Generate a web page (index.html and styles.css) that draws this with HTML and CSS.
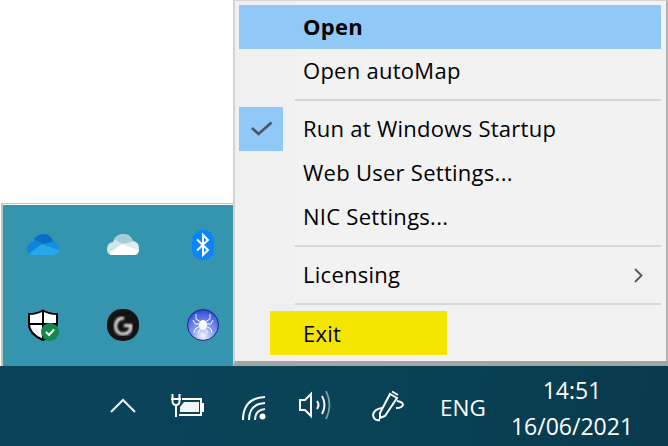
FILE: index.html
```html
<!DOCTYPE html>
<html lang="en">
<head>
<meta charset="utf-8">
<title>autoMap tray menu</title>
<link rel="stylesheet" href="styles.css">
</head>
<body>
<div class="desktop">
  <div class="workspace">
    <div class="left-col">
      <div class="tray-popup">
        <div class="tray-cell">
          <svg width="32" height="21" viewBox="0 0 32 21"><path d="M4 21 Q0 20 0 15 Q0 9 6 8 Q10 0 17 0 Q23 0 26 7 Q32 8 32 15 Q32 20 28 21Z" fill="#0f82dd"/><path d="M7 5 Q10 0 17 0 Q23 0 26 7 L25 8 L16 10Z" fill="#0a6fc4"/><path d="M25 8 L26 7 Q32 8 32 15 L31 16 L16 10Z" fill="#1490df"/><path d="M2 19.500 L15 10 L31 16 L32 15 Q32 20 28 21 H4Z" fill="#28a8ea"/></svg>
        </div>
        <div class="tray-cell">
          <svg width="32" height="21" viewBox="0 0 32 21"><path d="M4 21 Q0 20 0 15 Q0 9 6 8 Q10 0 17 0 Q23 0 26 7 Q32 8 32 15 Q32 20 28 21Z" fill="#cfe5ea"/><path d="M7 5 Q10 0 17 0 Q23 0 26 7 L25 8 L16 10Z" fill="#a3cdd8"/><path d="M25 8 L26 7 Q32 8 32 15 L31 16 L16 10Z" fill="#d9ebef"/><path d="M2 19.500 L15 10 L31 16 L32 15 Q32 20 28 21 H4Z" fill="#fff"/></svg>
        </div>
        <div class="tray-cell">
          <svg width="22" height="30" viewBox="0 0 22 30"><rect width="22" height="30" rx="10" fill="#0a84ff"/><path d="M5 9.500 L16 20 L11 25 V5 L16 10 L5 20.500" fill="none" stroke="#fff" stroke-width="2"/></svg>
        </div>
        <div class="tray-cell">
          <svg width="32" height="32" viewBox="0 0 32 32"><path d="M16 1.500 Q10 5 2 5 V15 Q2 25 16 31 Q29 25 30 15 V5 Q22 5 16 1.500Z" fill="#fff" stroke="#000" stroke-width="2"/><path d="M16 1.500 V31 M2 15 H30" stroke="#000" stroke-width="2"/><circle cx="23" cy="23" r="9" fill="#118a4a"/><path d="M19 23 L22 26 L27 20.500" fill="none" stroke="#fff" stroke-width="2"/></svg>
        </div>
        <div class="tray-cell">
          <svg width="32" height="32" viewBox="0 0 32 32"><defs><filter id="soft"><feGaussianBlur stdDeviation="0.800"/></filter></defs><rect width="32" height="32" rx="15" fill="#131313"/><path d="M17 9 Q9 9 8.500 17 Q9 25 16 25 Q24 25 24 16.500 H17" fill="none" stroke="#e2e2e2" stroke-width="3" filter="url(#soft)"/></svg>
        </div>
        <div class="tray-cell">
          <svg width="32" height="32" viewBox="0 0 32 32"><defs><radialGradient id="orb" cx="50%" cy="85%" r="80%"><stop offset="0" stop-color="#f8f8ff"/><stop offset="0.45" stop-color="#8496f7"/><stop offset="1" stop-color="#3550d8"/></radialGradient></defs><circle cx="16" cy="16" r="15.500" fill="url(#orb)" stroke="#162a80"/><ellipse cx="16" cy="16" rx="4" ry="5" fill="#fff"/><path d="M14 13 L9 10 L9 5 M18 13 L23 10 L23 5 M13 15 H8 L6 11 M19 15 H24 L26 11 M13 17 L8 20 L7 24 M19 17 L24 20 L25 24 M14 19 L11 24 M18 19 L21 24" fill="none" stroke="#fff" stroke-width="1"/></svg>
        </div>
      </div>
    </div>
    <div class="menu">
      <div class="row row-active"><span class="gutter"></span><span class="label label-bold">Open</span></div>
      <div class="row"><span class="gutter"></span><span class="label">Open autoMap</span></div>
      <div class="sep"></div>
      <div class="row"><span class="gutter gutter-checked"><svg width="22" height="16" viewBox="0 0 22 16"><path d="M1 7 L7.500 13 L20.500 1.500" fill="none" stroke="#4a5560" stroke-width="2.600"/></svg></span><span class="label">Run at Windows Startup</span></div>
      <div class="row"><span class="gutter"></span><span class="label">Web User Settings...</span></div>
      <div class="row"><span class="gutter"></span><span class="label">NIC Settings...</span></div>
      <div class="sep"></div>
      <div class="row"><span class="gutter"></span><span class="label">Licensing</span><svg class="chevron" width="9" height="15" viewBox="0 0 9 15"><path d="M1 1 L7.500 7.500 L1 14" fill="none" stroke="#555" stroke-width="1.800"/></svg></div>
      <div class="sep"></div>
      <div class="row row-exit"><span class="exit-mark"><span class="label">Exit</span></span></div>
    </div>
  </div>
  <div class="taskbar">
    <svg class="tb-chevron" width="26" height="15" viewBox="0 0 26 15"><path d="M1 14 L13 2 L25 14" fill="none" stroke="#eef4f6" stroke-width="2"/></svg>
    <svg class="tb-power" width="33" height="24" viewBox="0 0 33 24"><path d="M1.500 1 V8 Q1.500 12 5 12 Q8.500 12 8.500 8 V1 M0 6 H10 M5 12 V24" fill="none" stroke="#fff" stroke-width="2"/><path d="M11 6 H30 V22 H8 M30 11 H32 V18 H30" fill="none" stroke="#fff" stroke-width="2"/><path d="M13 9 H28 V19 H9 V14Z" fill="#f0f5f6"/></svg>
    <svg class="tb-wifi" width="26" height="26" viewBox="0 0 26 26"><path d="M2 25 Q2 3 24 2" fill="none" stroke="#fff" stroke-width="2"/><path d="M8 25 Q8 9 24 8" fill="none" stroke="#fff" stroke-width="2"/><path d="M14 25 Q14 15 24 14" fill="none" stroke="#fff" stroke-width="2" opacity="0.900"/><circle cx="21.500" cy="21.500" r="3" fill="#fff"/></svg>
    <svg class="tb-sound" width="33" height="28" viewBox="0 0 33 28"><path d="M1 9 H6 L12 3 V25 L6 19 H1Z" fill="none" stroke="#fff" stroke-width="2"/><path d="M18 10 Q21 14 18 18" fill="none" stroke="#fff" stroke-width="2"/><path d="M23 5 Q28 14 23 23" fill="none" stroke="#fff" stroke-width="2"/><path d="M27 0 Q34 14 27 28" fill="none" stroke="#7f9ea9" stroke-width="1.800"/></svg>
    <svg class="tb-pen" width="33" height="33" viewBox="0 0 33 33"><path d="M11 19 Q3 20 2 26 Q3 32 9 31" fill="none" stroke="#fff" stroke-width="2"/><path d="M19 5 L26 9 L14 27 L9 29 L9 24Z" fill="none" stroke="#fff" stroke-width="2"/><path d="M21 2.500 L27 6" stroke="#fff" stroke-width="2"/><path d="M26 12 Q32 13 32 16 Q31 19 25 19" fill="none" stroke="#fff" stroke-width="2"/></svg>
    <span class="tb-lang">ENG</span>
    <div class="tb-clock"><span>14:51</span><span>16/06/2021</span></div>
  </div>
</div>
</body>
</html>
```
FILE: styles.css
```css
* { box-sizing: border-box; }
html, body { margin: 0; padding: 0; }
body { background: #fff; overflow: hidden; font-family: "Open Sans", "Noto Sans", sans-serif; }

.desktop { width: 668px; height: 446px; display: flex; flex-direction: column; overflow: hidden; }
.workspace { height: 366px; display: flex; align-items: stretch; }

.left-col { width: 233px; display: flex; flex-direction: column; justify-content: flex-end; padding-left: 1px; }
.tray-popup {
  height: 163px;
  background: #3595ae;
  border-top: 1px solid #c4c4c4;
  border-left: 2px solid #c4c4c4;
  box-shadow: inset 0 1px 0 #fff;
  display: grid;
  grid-template-columns: 80px 80px 80px;
  grid-template-rows: 81px 79px;
}
.tray-cell { display: flex; align-items: center; justify-content: center; }

.menu {
  width: 435px;
  height: 366px;
  background: linear-gradient(to right, #f0f0f0 60px, #f2f2f2 60px);
  border-top: 1px solid #d4d4d4;
  border-left: 2px solid #d4d4d4;
  border-right: 2px solid #b0b0b0;
  border-bottom: 5px solid #a4a4a4;
  padding: 4px 5px 0 4px;
  display: flex;
  flex-direction: column;
}
.row { height: 44px; flex: none; display: flex; align-items: center; font-size: 22px; letter-spacing: 0.27px; line-height: 44px; color: #000; }
.row > .label { padding-bottom: 2px; }
.row-active { background: #90c8f8; }
.gutter { width: 64px; height: 44px; flex: none; display: flex; align-items: center; }
.gutter-checked { background: linear-gradient(to right, #90c8f8 44px, transparent 44px); padding-left: 12px; }
.label { white-space: nowrap; }
.label-bold { font-weight: 700; }
.chevron { margin-left: auto; margin-right: 18px; }

.sep { height: 14px; flex: none; margin-left: 56px; display: flex; }
.sep::before { content: ""; display: block; width: 100%; height: 2px; margin-top: 6px; background: #d6d6d6; }

.row-exit { padding-left: 31px; }
.exit-mark { width: 177px; height: 44px; background: #f4e600; padding-left: 33px; }

.taskbar {
  flex: 1;
  background: linear-gradient(100deg, #0b445c 0%, #0a4357 50%, #083a4c 100%);
  display: flex;
  align-items: center;
  color: #fff;
  padding-left: 110px;
}
.tb-chevron { margin-right: 35px; margin-top: -2px; }
.tb-power { margin-right: 37px; margin-top: -2px; }
.tb-wifi { margin-right: 32px; margin-top: 3px; }
.tb-sound { margin-right: 39px; margin-top: -2px; }
.tb-pen { margin-right: 36px; margin-top: -1px; }
.tb-lang { font-size: 22.500px; width: 72px; margin-top: 3px; }
.tb-clock { display: flex; flex-direction: column; align-items: center; width: 120px; font-size: 23px; line-height: 36px; margin-top: 4px; }
```
